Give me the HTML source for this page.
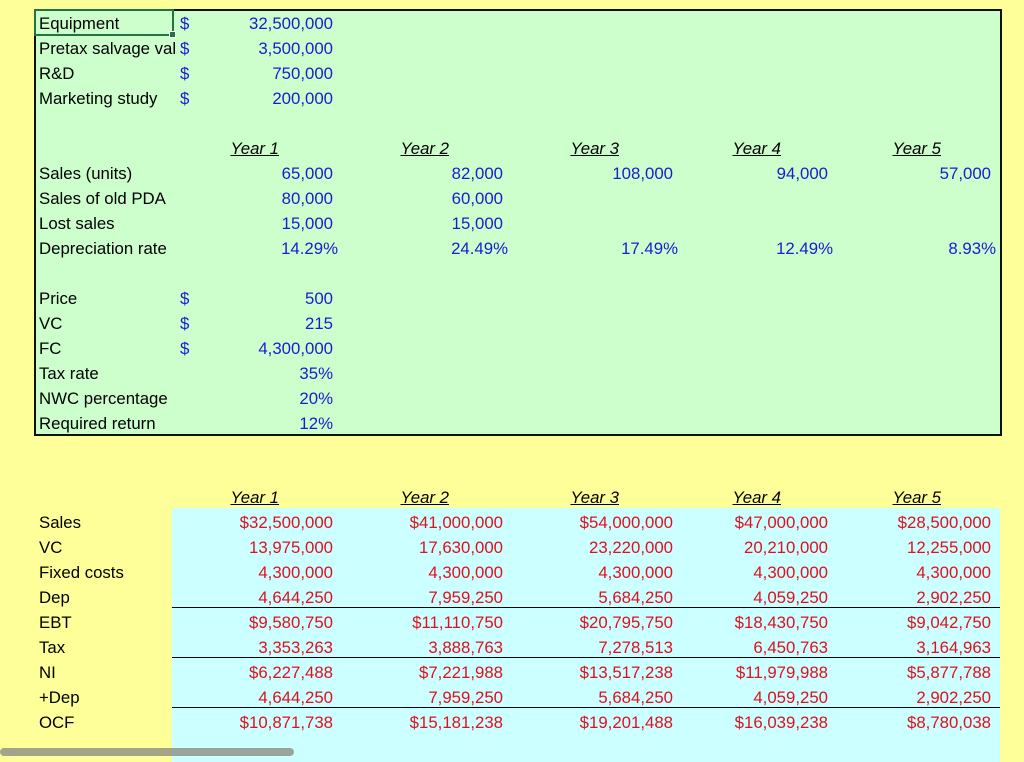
<!DOCTYPE html>
<html><head><meta charset="utf-8"><style>
body{margin:0;width:1024px;height:762px;background:#ffff99;position:relative;overflow:hidden;font-family:"Liberation Sans",sans-serif;font-size:16.8px}
.a{position:absolute;white-space:nowrap;line-height:20px}
.l{color:#000}
.b{color:#1b1bd0}
.r{color:#e0101e}
.y{font-style:italic;text-decoration:underline;color:#000}
</style></head><body>
<div style="position:absolute;left:34px;top:9px;width:964px;height:423px;background:#ccffcc;border:2px solid #111"></div>
<div style="position:absolute;left:34px;top:9px;width:136px;height:23px;border:2px solid #217346"></div>
<div style="position:absolute;left:169px;top:31px;width:5px;height:5px;background:#217346;border:1px solid #fff"></div>
<div style="position:absolute;left:172px;top:508px;width:828px;height:254px;background:#ccffff"></div>
<div style="position:absolute;left:172px;top:607px;width:828px;height:1px;background:#000"></div>
<div style="position:absolute;left:172px;top:657px;width:828px;height:1px;background:#000"></div>
<div style="position:absolute;left:172px;top:707px;width:828px;height:1px;background:#000"></div>
<div style="position:absolute;left:0;top:748px;width:294px;height:8px;background:#8a8f86;opacity:.8;border-radius:4px"></div>
<div id="c"></div>
<script>
var h='';
function t(x,y,s,c,right){h+='<div class="a '+c+'" style="'+(right?'right:'+(1024-x)+'px':'left:'+x+'px')+';top:'+(y-9)+'px">'+s+'</div>';}
var L=[['Equipment',23],['Pretax salvage val',48],['R&amp;D',73],['Marketing study',98],['Sales (units)',173],['Sales of old PDA',198],['Lost sales',223],['Depreciation rate',248],['Price',298],['VC',323],['FC',348],['Tax rate',373],['NWC percentage',398],['Required return',423]];
L.forEach(function(a){t(39,a[1],a[0],'l')});
[23,48,73,98,298,323,348].forEach(function(y){t(180,y,'$','b')});
[['32,500,000',23],['3,500,000',48],['750,000',73],['200,000',98],['500',298],['215',323],['4,300,000',348],['35%',373],['20%',398],['12%',423]].forEach(function(a){t(333,a[1],a[0],'b',1)});
var R=[333,503,673,828,991],YR=[279,449,619,781,941];
for(var i=0;i<5;i++){t(YR[i],148,'Year '+(i+1),'y',1);t(YR[i],497,'Year '+(i+1),'y',1);}
['65,000','82,000','108,000','94,000','57,000'].forEach(function(s,i){t(R[i],173,s,'b',1)});
['80,000','60,000'].forEach(function(s,i){t(R[i],198,s,'b',1)});
['15,000','15,000'].forEach(function(s,i){t(R[i],223,s,'b',1)});
[[338,'14.29%'],[508,'24.49%'],[678,'17.49%'],[833,'12.49%'],[996,'8.93%']].forEach(function(a){t(a[0],248,a[1],'b',1)});
var B=[['Sales','$32,500,000','$41,000,000','$54,000,000','$47,000,000','$28,500,000'],
['VC','13,975,000','17,630,000','23,220,000','20,210,000','12,255,000'],
['Fixed costs','4,300,000','4,300,000','4,300,000','4,300,000','4,300,000'],
['Dep','4,644,250','7,959,250','5,684,250','4,059,250','2,902,250'],
['EBT','$9,580,750','$11,110,750','$20,795,750','$18,430,750','$9,042,750'],
['Tax','3,353,263','3,888,763','7,278,513','6,450,763','3,164,963'],
['NI','$6,227,488','$7,221,988','$13,517,238','$11,979,988','$5,877,788'],
['+Dep','4,644,250','7,959,250','5,684,250','4,059,250','2,902,250'],
['OCF','$10,871,738','$15,181,238','$19,201,488','$16,039,238','$8,780,038']];
B.forEach(function(r,k){var y=522+25*k;t(39,y,r[0],'l');for(var i=0;i<5;i++)t(R[i],y,r[i+1],'r',1);});
document.getElementById('c').innerHTML=h;
</script>
</body></html>
